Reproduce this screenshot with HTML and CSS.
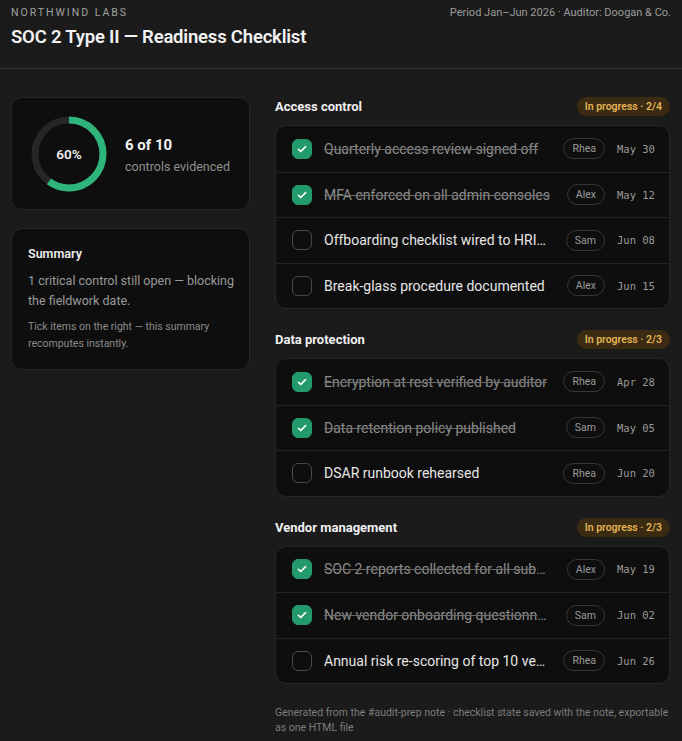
FILE: index.html
```html
<!DOCTYPE html>
<html lang="en">
<head>
<meta charset="utf-8">
<title>SOC 2 Type II — Readiness Checklist</title>
<link rel="stylesheet" href="styles.css">
</head>
<body>
<header class="top">
  <div class="brand">
    <div class="org">NORTHWIND LABS</div>
    <h1 class="title">SOC 2 Type II — Readiness Checklist</h1>
  </div>
  <div class="period">Period Jan–Jun 2026 · Auditor: Doogan &amp; Co.</div>
</header>
<main class="layout">
  <aside class="side">
    <section class="card score">
      <div class="donut">
        <svg width="78" height="78" viewBox="0 0 78 78">
          <circle cx="39" cy="39" r="34" fill="none" stroke="#262626" stroke-width="7"/>
          <circle cx="39" cy="39" r="34" fill="none" stroke="#2fb47c" stroke-width="7" stroke-dasharray="128.18 213.63" transform="rotate(-90 39 39)"/>
        </svg>
        <span class="pct">60%</span>
      </div>
      <div class="score-text">
        <div class="big">6 of 10</div>
        <div class="sub">controls evidenced</div>
      </div>
    </section>
    <section class="card summary">
      <h2 class="sum-title">Summary</h2>
      <p class="sum-main">1 critical control still open — blocking the fieldwork date.</p>
      <p class="sum-note">Tick items on the right — this summary recomputes instantly.</p>
    </section>
  </aside>
  <div class="lists">
    <section class="group">
      <div class="group-head"><h2>Access control</h2><span class="badge">In progress · 2/4</span></div>
      <ul class="items">
        <li class="item done"><span class="box"><svg viewBox="0 0 20 20"><path d="M6 10.3l2.6 2.5L14 7.4"/></svg></span><span class="label">Quarterly access review signed off</span><span class="who">Rhea</span><span class="date">May 30</span></li>
        <li class="item done"><span class="box"><svg viewBox="0 0 20 20"><path d="M6 10.3l2.6 2.5L14 7.4"/></svg></span><span class="label">MFA enforced on all admin consoles</span><span class="who">Alex</span><span class="date">May 12</span></li>
        <li class="item"><span class="box"></span><span class="label">Offboarding checklist wired to HRIS termination feed</span><span class="who">Sam</span><span class="date">Jun 08</span></li>
        <li class="item"><span class="box"></span><span class="label">Break-glass procedure documented</span><span class="who">Alex</span><span class="date">Jun 15</span></li>
      </ul>
    </section>
    <section class="group">
      <div class="group-head"><h2>Data protection</h2><span class="badge">In progress · 2/3</span></div>
      <ul class="items">
        <li class="item done"><span class="box"><svg viewBox="0 0 20 20"><path d="M6 10.3l2.6 2.5L14 7.4"/></svg></span><span class="label">Encryption at rest verified by auditor</span><span class="who">Rhea</span><span class="date">Apr 28</span></li>
        <li class="item done"><span class="box"><svg viewBox="0 0 20 20"><path d="M6 10.3l2.6 2.5L14 7.4"/></svg></span><span class="label">Data retention policy published</span><span class="who">Sam</span><span class="date">May 05</span></li>
        <li class="item"><span class="box"></span><span class="label">DSAR runbook rehearsed</span><span class="who">Rhea</span><span class="date">Jun 20</span></li>
      </ul>
    </section>
    <section class="group">
      <div class="group-head"><h2>Vendor management</h2><span class="badge">In progress · 2/3</span></div>
      <ul class="items">
        <li class="item done"><span class="box"><svg viewBox="0 0 20 20"><path d="M6 10.3l2.6 2.5L14 7.4"/></svg></span><span class="label">SOC 2 reports collected for all subprocessors</span><span class="who">Alex</span><span class="date">May 19</span></li>
        <li class="item done"><span class="box"><svg viewBox="0 0 20 20"><path d="M6 10.3l2.6 2.5L14 7.4"/></svg></span><span class="label">New vendor onboarding questionnaire live</span><span class="who">Sam</span><span class="date">Jun 02</span></li>
        <li class="item"><span class="box"></span><span class="label">Annual risk re-scoring of top 10 vendors</span><span class="who">Rhea</span><span class="date">Jun 26</span></li>
      </ul>
    </section>
    <p class="foot">Generated from the #audit-prep note · checklist state saved with the note, exportable as one HTML file</p>
  </div>
</main>
</body>
</html>
```

FILE: styles.css
```css
* { box-sizing: border-box; }
html, body { margin: 0; padding: 0; }
body {
  background: #1b1b1b;
  color: #e8e8e8;
  font-family: Roboto, "Liberation Sans", sans-serif;
  width: 682px;
  min-height: 741px;
}
.top {
  display: flex;
  justify-content: space-between;
  align-items: flex-start;
  padding: 6px 11px 0 11px;
  height: 69px;
  border-bottom: 1px solid #333;
}
.org {
  font-size: 10.5px;
  letter-spacing: 2px;
  color: #a0a0a0;
  line-height: 14px;
}
.title {
  margin: 4px 0 0 0;
  font-size: 18.5px;
  font-weight: 600;
  color: #f2f2f2;
  line-height: 26px;
  letter-spacing: -0.2px;
}
.period {
  font-size: 11px;
  color: #9a9a9a;
  line-height: 14px;
}
.layout {
  display: grid;
  grid-template-columns: 239px 395px;
  column-gap: 25px;
  padding: 28px 12px 0 11px;
}
.side { display: flex; flex-direction: column; gap: 18px; }
.card {
  background: #0e0e0e;
  border: 1px solid #262626;
  border-radius: 11px;
}
.score {
  height: 113px;
  display: flex;
  align-items: center;
  padding-left: 18px;
  gap: 17px;
}
.donut { position: relative; width: 78px; height: 78px; }
.donut svg { display: block; }
.pct {
  position: absolute;
  inset: 0;
  display: flex;
  align-items: center;
  justify-content: center;
  font-size: 13.5px;
  font-weight: 600;
  color: #f0f0f0;
}
.score-text { margin-top: 2px; }
.big { font-size: 15px; font-weight: 700; color: #f2f2f2; line-height: 20px; }
.sub { font-size: 12.5px; color: #8f8f8f; margin-top: 4px; line-height: 16px; }
.summary { padding: 16px 10px 17px 16px; }
.sum-title { margin: 0; font-size: 12.5px; font-weight: 600; color: #ededed; line-height: 18px; }
.sum-main { margin: 8px 0 0 0; font-size: 12.5px; line-height: 20px; color: #9a9a9a; }
.sum-note { margin: 7px 0 0 0; font-size: 10.5px; line-height: 17px; color: #8a8a8a; }
.lists { display: flex; flex-direction: column; }
.group + .group { margin-top: 21px; }
.group-head {
  display: flex;
  justify-content: space-between;
  align-items: center;
  height: 19px;
  margin-bottom: 9px;
}
.group-head h2 { margin: 0; font-size: 13px; font-weight: 700; color: #f0f0f0; }
.badge {
  height: 19px;
  line-height: 19px;
  padding: 0 8px;
  border-radius: 10px;
  background: #3a2b12;
  color: #e3b352;
  font-size: 10.5px;
  font-weight: 600;
}
.items {
  list-style: none;
  margin: 0;
  padding: 0;
  background: #0e0e0e;
  border: 1px solid #262626;
  border-radius: 11px;
}
.item {
  height: 45.5px;
  display: flex;
  align-items: center;
  padding: 0 12px 0 16px;
}
.item + .item { border-top: 1px solid #232323; }
.box {
  flex: none;
  width: 20px;
  height: 20px;
  border-radius: 6px;
  border: 1.5px solid #4a4a4a;
}
.box svg { width: 100%; height: 100%; display: block; fill: none; stroke: #fff; stroke-width: 1.8; stroke-linecap: round; stroke-linejoin: round; }
.done .box { background: #229a6b; border-color: #229a6b; }
.label {
  flex: 1;
  min-width: 0;
  margin-left: 12px;
  font-size: 14px;
  line-height: 20px;
  color: #e6e6e6;
  white-space: nowrap;
  overflow: hidden;
  text-overflow: ellipsis;
}
.done .label { color: #8c8c8c; text-decoration: line-through; text-decoration-color: #6a6a6a; }
.who {
  flex: none;
  margin-left: 14px;
  height: 21px;
  line-height: 19px;
  padding: 0 8px;
  border: 1px solid #383838;
  border-radius: 11px;
  font-size: 10.5px;
  color: #9a9a9a;
}
.date {
  flex: none;
  width: 40px;
  margin-left: 12px;
  font-family: "DejaVu Sans Mono", "Liberation Mono", monospace;
  font-size: 10.5px;
  color: #9a9a9a;
}
.foot {
  margin: 21px 0 0 0;
  font-size: 10.5px;
  line-height: 15px;
  color: #7c7c7c;
}
```
